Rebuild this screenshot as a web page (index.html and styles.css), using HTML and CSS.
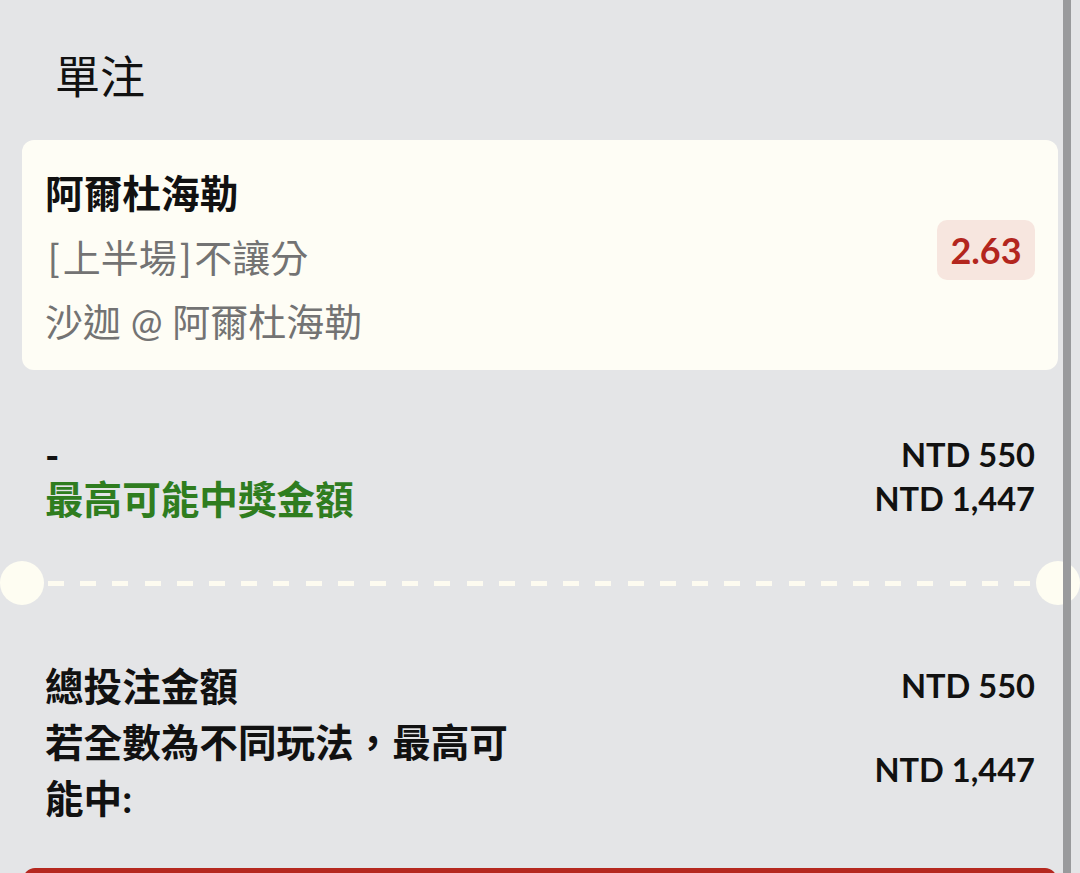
FILE: index.html
```html
<!DOCTYPE html>
<html lang="zh-Hant">
<head>
<meta charset="utf-8">
<title>單注</title>
<link rel="stylesheet" href="styles.css">
</head>
<body>
<div class="page">
  <div class="header">單注</div>

  <div class="card">
    <div class="card-info">
      <div class="card-title">阿爾杜海勒</div>
      <div class="card-sub"><span class="br">[</span>上半場<span class="br">]</span>不讓分</div>
      <div class="card-sub">沙迦 @ 阿爾杜海勒</div>
    </div>
    <div class="odds">2.63</div>
  </div>

  <div class="summary summary-top">
    <div class="label">-</div>
    <div class="value">NTD 550</div>
    <div class="label label-green">最高可能中獎金額</div>
    <div class="value">NTD 1,447</div>
  </div>

  <div class="divider">
    <span class="notch"></span>
    <span class="dashes"></span>
    <span class="notch"></span>
  </div>

  <div class="summary summary-bottom">
    <div class="label">總投注金額</div>
    <div class="value">NTD 550</div>
    <div class="label">若全數為不同玩法，最高可能中:</div>
    <div class="value value-mid">NTD 1,447</div>
  </div>

  <div class="submit"></div>
</div>
<div class="scrollbar"></div>
</body>
</html>
```
FILE: styles.css
```css
html, body {
  margin: 0;
  padding: 0;
}

body {
  background: #e4e5e7;
  font-family: "Lato", "Noto Sans CJK TC", sans-serif;
  color: #111;
  overflow: hidden;
  height: 873px;
}

.page {
  padding: 0 22px;
}

.header {
  padding: 50px 0 0 33px;
  height: 90px;
  line-height: 50px;
  font-size: 45px;
  font-family: "Noto Sans CJK TC", sans-serif;
  font-weight: 400;
}

.card {
  background: #fefdf5;
  border-radius: 12px;
  padding: 21px 23px 17px;
  display: flex;
  justify-content: space-between;
  align-items: center;
}

.card-info {
  line-height: 64px;
  font-size: 38.7px;
}

.card-title {
  font-weight: 700;
  color: #111;
}

.card-sub {
  color: #737373;
  font-weight: 400;
  font-size: 38px;
}

.card-sub .br {
  padding: 0 3px;
}

.odds {
  background: #f7e6df;
  color: #b3261e;
  font-weight: 700;
  font-size: 36px;
  height: 60px;
  line-height: 60px;
  min-width: 98px;
  text-align: center;
  border-radius: 10px;
  margin-bottom: 14px;
}

.summary {
  display: grid;
  grid-template-columns: 480px 1fr;
  padding: 0 23px;
}

.summary-top {
  margin-top: 63px;
  line-height: 44px;
}

.summary-bottom {
  margin-top: 53px;
  line-height: 56px;
}

.label {
  font-size: 38.6px;
  font-weight: 700;
  color: #111;
}

.label-green {
  color: #2f7d1f;
}

.value {
  font-size: 32.6px;
  font-weight: 700;
  text-align: right;
  color: #111;
}

.value-mid {
  align-self: center;
}

.divider {
  margin: 40px -22px 0;
  height: 44px;
  display: flex;
  align-items: center;
}

.notch {
  width: 44px;
  height: 44px;
  border-radius: 50%;
  background: #fefdf2;
  flex: none;
}

.dashes {
  flex: 1;
  height: 5px;
  margin: 0 5px 0 4px;
  background-image: repeating-linear-gradient(to right, #fdfbf0 0 16px, transparent 16px 32.2px);
}

.submit {
  margin: 42px 1px 0;
  height: 100px;
  border-radius: 12px;
  background: #b5281f;
}

.scrollbar {
  position: fixed;
  top: 0;
  left: 1063px;
  width: 8px;
  height: 873px;
  background: #999a9c;
}
```
